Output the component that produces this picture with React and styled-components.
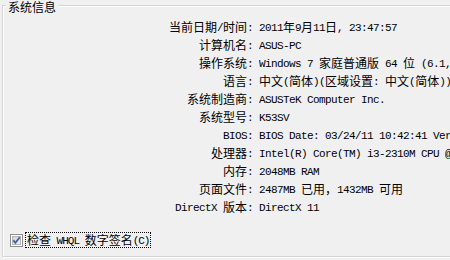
import React from "react";
import styled, { createGlobalStyle } from "styled-components";

const GlobalStyle = createGlobalStyle`
  html, body {
    margin: 0;
    padding: 0;
    background: #f0f0f0;
    overflow: hidden;
  }
  body {
    font-family: "Noto Sans CJK SC", "Noto Sans", sans-serif;
    color: #000;
  }
`;

const Page = styled.div`
  width: 450px;
  height: 260px;
  overflow: hidden;
  box-sizing: border-box;
  padding: 5px 0 0 2px;
`;

const GroupBox = styled.section`
  position: relative;
  box-sizing: border-box;
  width: 480px;
  height: 252px;
  border: 1px solid #d5d5d5;
  box-shadow: inset 1px 1px 0 #fff, 1px 1px 0 #fff;
  display: flex;
  flex-direction: column;
  padding: 12px 0 8px 0;
`;

const Legend = styled.h2`
  position: absolute;
  top: -6px;
  left: 3px;
  margin: 0;
  padding: 0 2px;
  background: #f0f0f0;
  font-size: 12px;
  line-height: 13px;
  font-weight: normal;
`;

const InfoGrid = styled.dl`
  margin: 0;
  display: grid;
  grid-template-columns: 256px 1fr;
  grid-auto-rows: 18px;
`;

const Label = styled.dt`
  display: flex;
  align-items: center;
  justify-content: flex-end;
  white-space: nowrap;
  padding-right: 6px;
`;

const Value = styled.dd`
  margin: 0;
  display: flex;
  align-items: center;
  white-space: nowrap;
  overflow: hidden;
`;

const Cjk = styled.span`
  flex-shrink: 0;
  font-family: "Noto Sans CJK SC", sans-serif;
  font-size: 12px;
  line-height: 18px;
`;

const Latin = styled.span`
  flex-shrink: 0;
  font-family: "Liberation Mono", monospace;
  font-size: 11px;
  letter-spacing: -0.6px;
  line-height: 18px;
  padding-top: 2px;
  white-space: pre;
`;

const CheckRow = styled.div`
  margin-top: auto;
  display: flex;
  align-items: center;
  gap: 2px;
  padding-left: 7px;
`;

const CheckLabel = styled.span`
  display: inline-flex;
  align-items: center;
  height: 14px;
  border: 1px dotted #000;
  padding: 0 1px;
  white-space: nowrap;

  ${Cjk}, ${Latin} {
    line-height: 14px;
  }
  ${Latin} {
    letter-spacing: -1px;
  }
`;

const Mixed = ({ text }) => {
  const parts = text.split(/([\u3000-\u303f\u4e00-\u9fff\uff00-\uffef]+)/);
  return parts.map((p, i) =>
    p === "" ? null : /[\u3000-\u303f\u4e00-\u9fff\uff00-\uffef]/.test(p) ? (
      <Cjk key={i}>{p}</Cjk>
    ) : (
      <Latin key={i}>{p}</Latin>
    )
  );
};

const CheckBox = () => (
  <svg width="13" height="13" viewBox="0 0 13 13">
    <defs>
      <linearGradient id="cbg" x1="0" y1="0" x2="1" y2="1">
        <stop offset="0" stopColor="#cbcfd5" />
        <stop offset="1" stopColor="#f6f6f6" />
      </linearGradient>
    </defs>
    <rect x="0.5" y="0.5" width="12" height="12" fill="#fff" stroke="#8f8f8f" />
    <rect x="2.5" y="2.5" width="8" height="8" fill="url(#cbg)" stroke="#b4b8be" />
    <path d="M3.3 6.3 L5.4 8.8 L9.8 3.2" fill="none" stroke="#4a5f97" strokeWidth="1.8" />
  </svg>
);

const rows = [
  ["当前日期/时间", "2011年9月11日, 23:47:57"],
  ["计算机名", "ASUS-PC"],
  ["操作系统", "Windows 7 家庭普通版 64 位 (6.1, 版本 7601)"],
  ["语言", "中文(简体)(区域设置: 中文(简体))"],
  ["系统制造商", "ASUSTeK Computer Inc."],
  ["系统型号", "K53SV"],
  ["BIOS", "BIOS Date: 03/24/11 10:42:41 Ver: 04.06.04"],
  ["处理器", "Intel(R) Core(TM) i3-2310M CPU @ 2.10GHz (4 CPUs)"],
  ["内存", "2048MB RAM"],
  ["页面文件", "2487MB 已用，1432MB 可用"],
  ["DirectX 版本", "DirectX 11"],
];

export default function App() {
  return (
    <>
      <GlobalStyle />
      <Page>
        <GroupBox>
          <Legend>系统信息</Legend>
          <InfoGrid>
            {rows.map(([label, value]) => (
              <React.Fragment key={label}>
                <Label>
                  <Mixed text={label + ":"} />
                </Label>
                <Value>
                  <Mixed text={value} />
                </Value>
              </React.Fragment>
            ))}
          </InfoGrid>
          <CheckRow>
            <CheckBox />
            <CheckLabel>
              <Mixed text="检查 WHQL 数字签名(C)" />
            </CheckLabel>
          </CheckRow>
        </GroupBox>
      </Page>
    </>
  );
}
